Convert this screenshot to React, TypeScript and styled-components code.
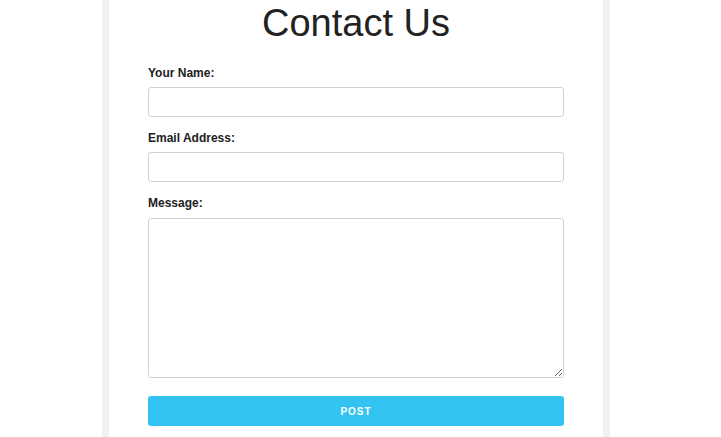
import styled, { createGlobalStyle } from 'styled-components';

const GlobalStyle = createGlobalStyle`
  html, body {
    margin: 0;
    padding: 0;
    background: #fff;
    font-family: "Liberation Sans", Arial, sans-serif;
    color: #222;
  }
`;

const Page = styled.div`
  display: flex;
  padding-left: 102px;
`;

const Card = styled.div`
  width: 416px;
  min-height: 437px;
  border-left: 7px solid #f1f1f1;
  border-right: 7px solid #f1f1f1;
  padding: 0 39px 20px;
  box-sizing: content-box;
  background: #fff;
`;

const Title = styled.h1`
  margin: 1px 0 21px;
  font-size: 38px;
  font-weight: 400;
  line-height: 44px;
  text-align: center;
  color: #222;
`;

const Form = styled.form`
  display: flex;
  flex-direction: column;
`;

const Label = styled.label`
  display: block;
  font-size: 12px;
  font-weight: 700;
  line-height: 15px;
  margin-bottom: 6px;
  color: #222;
`;

const Input = styled.input`
  display: block;
  box-sizing: border-box;
  width: 100%;
  height: 30px;
  margin: 0 0 14px;
  padding: 4px 8px;
  border: 1px solid #d1d1d1;
  border-radius: 3px;
  background: #fff;
  font: inherit;
  outline: none;
`;

const TextArea = styled.textarea`
  display: block;
  box-sizing: border-box;
  width: 100%;
  height: 160px;
  margin: 1px 0 18px;
  padding: 4px 8px;
  border: 1px solid #d1d1d1;
  border-radius: 3px;
  background: #fff;
  font: inherit;
  outline: none;
`;

const Button = styled.button`
  display: block;
  width: 100%;
  height: 30px;
  border: none;
  border-radius: 3px;
  background: #33c3f0;
  color: #fff;
  font-family: "Liberation Sans", Arial, sans-serif;
  font-size: 10px;
  font-weight: 700;
  letter-spacing: 1px;
  text-transform: uppercase;
  cursor: pointer;
`;

export default function App() {
  return (
    <>
      <GlobalStyle />
      <Page>
        <Card>
          <Title>Contact Us</Title>
          <Form onSubmit={(e) => e.preventDefault()}>
            <Label htmlFor="name">Your Name:</Label>
            <Input id="name" type="text" />
            <Label htmlFor="email">Email Address:</Label>
            <Input id="email" type="email" />
            <Label htmlFor="message">Message:</Label>
            <TextArea id="message" />
            <Button type="submit">Post</Button>
          </Form>
        </Card>
      </Page>
    </>
  );
}
